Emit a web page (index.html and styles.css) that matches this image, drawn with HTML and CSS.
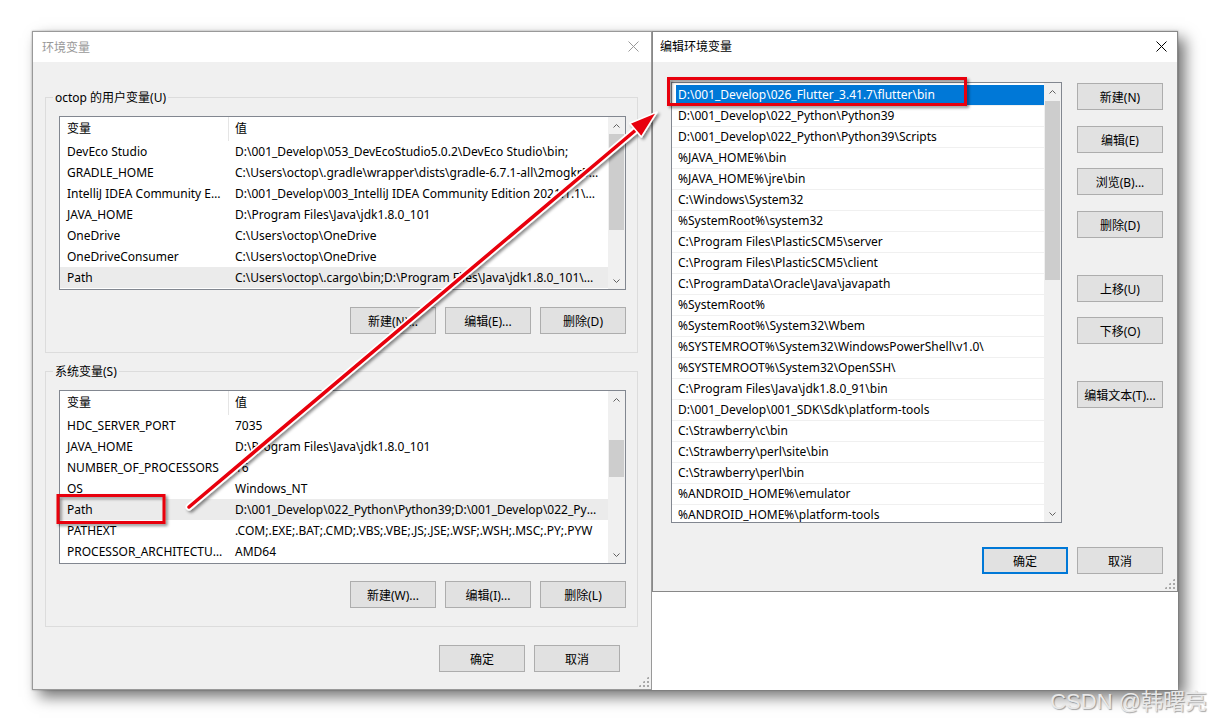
FILE: index.html
```html
<!DOCTYPE html>
<html lang="zh-CN">
<head>
    <meta charset="UTF-8">
    <meta name="viewport" content="width=device-width, initial-scale=1.0">
    <title>环境变量</title>
    <link rel="stylesheet" href="styles.css">
</head>
<body>
    <div class="shot">
        <!-- 环境变量 -->
        <div class="dialog env">
            <div class="titlebar inactive">
                <span>环境变量</span>
                <svg class="close" width="11" height="11" viewBox="0 0 11 11"><path d="M0.5 0.5 L10.5 10.5 M10.5 0.5 L0.5 10.5"/></svg>
            </div>
            <div class="env-body">
                <fieldset class="group">
                    <legend>octop 的用户变量(U)</legend>
                    <div class="lv">
                        <div class="lv-main">
                            <div class="lv-head"><span class="c-name">变量</span><span class="c-val">值</span></div>
                            <div class="lv-row"><span class="c-name">DevEco Studio</span><span class="c-val">D:\001_Develop\053_DevEcoStudio5.0.2\DevEco Studio\bin;</span></div>
                            <div class="lv-row"><span class="c-name">GRADLE_HOME</span><span class="c-val">C:\Users\octop\.gradle\wrapper\dists\gradle-6.7.1-all\2mogkr5btp8x2wqdpt7pgts1v\gradle-6.7.1</span></div>
                            <div class="lv-row"><span class="c-name">IntelliJ IDEA Community Edition</span><span class="c-val">D:\001_Develop\003_IntelliJ IDEA Community Edition 2021.1.1\bin;</span></div>
                            <div class="lv-row"><span class="c-name">JAVA_HOME</span><span class="c-val">D:\Program Files\Java\jdk1.8.0_101</span></div>
                            <div class="lv-row"><span class="c-name">OneDrive</span><span class="c-val">C:\Users\octop\OneDrive</span></div>
                            <div class="lv-row"><span class="c-name">OneDriveConsumer</span><span class="c-val">C:\Users\octop\OneDrive</span></div>
                            <div class="lv-row sel"><span class="c-name">Path</span><span class="c-val">C:\Users\octop\.cargo\bin;D:\Program Files\Java\jdk1.8.0_101\bin;D:\Program Files\Java\jdk1.8.0_101\jre\bin</span></div>
                        </div>
                        <div class="sb">
                            <div class="sb-btn"><svg width="7" height="4" viewBox="0 0 7 4"><path d="M0.5 3.5 L3.5 0.5 L6.5 3.5"/></svg></div>
                            <div class="sb-track"><div class="sb-thumb thumb-user"></div></div>
                            <div class="sb-btn"><svg width="7" height="4" viewBox="0 0 7 4"><path d="M0.5 0.5 L3.5 3.5 L6.5 0.5"/></svg></div>
                        </div>
                    </div>
                    <div class="btn-row">
                        <button>新建(N)...</button>
                        <button>编辑(E)...</button>
                        <button>删除(D)</button>
                    </div>
                </fieldset>

                <fieldset class="group sys">
                    <legend>系统变量(S)</legend>
                    <div class="lv">
                        <div class="lv-main">
                            <div class="lv-head"><span class="c-name">变量</span><span class="c-val">值</span></div>
                            <div class="lv-row"><span class="c-name">HDC_SERVER_PORT</span><span class="c-val">7035</span></div>
                            <div class="lv-row"><span class="c-name">JAVA_HOME</span><span class="c-val">D:\Program Files\Java\jdk1.8.0_101</span></div>
                            <div class="lv-row"><span class="c-name">NUMBER_OF_PROCESSORS</span><span class="c-val">16</span></div>
                            <div class="lv-row"><span class="c-name">OS</span><span class="c-val">Windows_NT</span></div>
                            <div class="lv-row sel"><span class="c-name">Path</span><span class="c-val">D:\001_Develop\022_Python\Python39;D:\001_Develop\022_Python\Python39\Scripts;%JAVA_HOME%\bin</span></div>
                            <div class="lv-row"><span class="c-name">PATHEXT</span><span class="c-val">.COM;.EXE;.BAT;.CMD;.VBS;.VBE;.JS;.JSE;.WSF;.WSH;.MSC;.PY;.PYW</span></div>
                            <div class="lv-row"><span class="c-name">PROCESSOR_ARCHITECTURE</span><span class="c-val">AMD64</span></div>
                        </div>
                        <div class="sb">
                            <div class="sb-btn"><svg width="7" height="4" viewBox="0 0 7 4"><path d="M0.5 3.5 L3.5 0.5 L6.5 3.5"/></svg></div>
                            <div class="sb-track"><div class="sb-thumb thumb-sys"></div></div>
                            <div class="sb-btn"><svg width="7" height="4" viewBox="0 0 7 4"><path d="M0.5 0.5 L3.5 3.5 L6.5 0.5"/></svg></div>
                        </div>
                    </div>
                    <div class="btn-row">
                        <button>新建(W)...</button>
                        <button>编辑(I)...</button>
                        <button>删除(L)</button>
                    </div>
                </fieldset>

                <div class="footer env-footer">
                    <button>确定</button>
                    <button>取消</button>
                </div>
            </div>
            <div class="grip"></div>
        </div>

        <!-- 编辑环境变量 -->
        <div class="dialog edit">
            <div class="titlebar">
                <span>编辑环境变量</span>
                <svg class="close" width="11" height="11" viewBox="0 0 11 11"><path d="M0.5 0.5 L10.5 10.5 M10.5 0.5 L0.5 10.5"/></svg>
            </div>
            <div class="edit-body">
                <div class="edit-top">
                    <div class="paths">
                        <div class="paths-main">
                            <div class="path sel">D:\001_Develop\026_Flutter_3.41.7\flutter\bin</div>
                            <div class="path">D:\001_Develop\022_Python\Python39</div>
                            <div class="path">D:\001_Develop\022_Python\Python39\Scripts</div>
                            <div class="path">%JAVA_HOME%\bin</div>
                            <div class="path">%JAVA_HOME%\jre\bin</div>
                            <div class="path">C:\Windows\System32</div>
                            <div class="path">%SystemRoot%\system32</div>
                            <div class="path">C:\Program Files\PlasticSCM5\server</div>
                            <div class="path">C:\Program Files\PlasticSCM5\client</div>
                            <div class="path">C:\ProgramData\Oracle\Java\javapath</div>
                            <div class="path">%SystemRoot%</div>
                            <div class="path">%SystemRoot%\System32\Wbem</div>
                            <div class="path">%SYSTEMROOT%\System32\WindowsPowerShell\v1.0\</div>
                            <div class="path">%SYSTEMROOT%\System32\OpenSSH\</div>
                            <div class="path">C:\Program Files\Java\jdk1.8.0_91\bin</div>
                            <div class="path">D:\001_Develop\001_SDK\Sdk\platform-tools</div>
                            <div class="path">C:\Strawberry\c\bin</div>
                            <div class="path">C:\Strawberry\perl\site\bin</div>
                            <div class="path">C:\Strawberry\perl\bin</div>
                            <div class="path">%ANDROID_HOME%\emulator</div>
                            <div class="path">%ANDROID_HOME%\platform-tools</div>
                        </div>
                        <div class="sb">
                            <div class="sb-btn"><svg width="7" height="4" viewBox="0 0 7 4"><path d="M0.5 3.5 L3.5 0.5 L6.5 3.5"/></svg></div>
                            <div class="sb-track"><div class="sb-thumb thumb-path"></div></div>
                            <div class="sb-btn"><svg width="7" height="4" viewBox="0 0 7 4"><path d="M0.5 0.5 L3.5 3.5 L6.5 0.5"/></svg></div>
                        </div>
                    </div>
                    <div class="side">
                        <button>新建(N)</button>
                        <button class="gap-md">编辑(E)</button>
                        <button>浏览(B)...</button>
                        <button class="gap-md">删除(D)</button>
                        <button class="gap-lg">上移(U)</button>
                        <button>下移(O)</button>
                        <button class="gap-lg">编辑文本(T)...</button>
                    </div>
                </div>
                <div class="footer edit-footer">
                    <button class="default">确定</button>
                    <button>取消</button>
                </div>
            </div>
            <div class="grip"></div>
        </div>
    </div>

    <!-- annotations drawn over the screenshot -->
    <svg class="annot" width="1211" height="722" viewBox="0 0 1211 722">
        <defs>
            <filter id="shade" x="-10%" y="-10%" width="120%" height="120%">
                <feDropShadow dx="2" dy="2" stdDeviation="1.5" flood-color="#000" flood-opacity="0.45"/>
            </filter>
        </defs>
        <g filter="url(#shade)">
            <rect x="58" y="495.5" width="106" height="27" fill="none" stroke="#e8000b" stroke-width="3"/>
            <rect x="668.5" y="78.5" width="297" height="26" fill="none" stroke="#e8000b" stroke-width="3"/>
        </g>
        <g filter="url(#shade)">
            <line x1="189" y1="507" x2="637" y2="129" stroke="#fff" stroke-width="7" stroke-linecap="round"/>
            <line x1="189" y1="507" x2="637" y2="129" stroke="#e8000b" stroke-width="3.5" stroke-linecap="round"/>
            <polygon points="657,112 641.4,137 629.8,123.2" fill="#e8000b" stroke="#fff" stroke-width="1.5" stroke-linejoin="round"/>
        </g>
    </svg>
    <div class="watermark">CSDN @韩曙亮</div>
</body>
</html>
```

FILE: styles.css
```css
* {
    box-sizing: border-box;
}
body {
    margin: 0;
    width: 1211px;
    height: 722px;
    overflow: hidden;
    position: relative;
    background-color: #fff;
    font-family: "Noto Sans", "Noto Sans CJK SC", sans-serif;
    font-size: 12px;
    color: #000;
}
.shot {
    display: flex;
    align-items: flex-start;
    width: 1146px;
    height: 659px;
    margin: 31px 0 0 32px;
    background-color: #fff;
    box-shadow: 0 0 2px rgba(0, 0, 0, 0.3), 7px 7px 14px rgba(0, 0, 0, 0.55);
}
.dialog {
    position: relative;
    display: flex;
    flex-direction: column;
    flex: none;
    background-color: #f0f0f0;
    border: 1px solid #999;
}
.dialog.env {
    width: 620px;
    height: 659px;
}
.dialog.edit {
    width: 526px;
    height: 561px;
    border-color: #888;
}
.titlebar {
    display: flex;
    align-items: center;
    justify-content: space-between;
    height: 30px;
    padding: 0 10px 2px 7px;
    background-color: #fff;
    flex: none;
}
.titlebar.inactive {
    padding: 0 12px 1px 9px;
    color: #999;
}
.close path {
    stroke: #000;
    stroke-width: 1;
    fill: none;
}
.titlebar.inactive .close path {
    stroke: #999;
}

/* group boxes */
.group {
    margin: 27px 13px 0 12px;
    padding: 11px 11px 18px 13px;
    border: 1px solid #dcdcdc;
    min-width: 0;
}
.group.sys {
    margin-top: 10px;
}
.group legend {
    margin-left: -6px;
    padding: 1px 2px 0;
    line-height: 15px;
}

/* list views */
.lv {
    display: flex;
    height: 174px;
    border: 1px solid #828790;
    background-color: #fff;
}
.lv-main {
    flex: 1;
    min-width: 0;
    overflow: hidden;
}
.lv-head {
    display: flex;
    height: 24px;
    line-height: 24px;
}
.lv-head .c-name {
    border-right: 1px solid #e5e5e5;
}
.lv-head .c-val {
    padding-left: 6px;
}
.lv-row {
    display: flex;
    height: 21px;
    line-height: 21px;
}
.lv-row.sel {
    background-color: #ebebeb;
}
.c-name {
    width: 169px;
    flex: none;
    padding: 0 5px 0 7px;
    white-space: nowrap;
    overflow: hidden;
    text-overflow: ellipsis;
}
.c-val {
    flex: 1;
    min-width: 0;
    padding: 0 8px 0 6px;
    white-space: nowrap;
    overflow: hidden;
    text-overflow: ellipsis;
}

/* scroll bars */
.sb {
    display: flex;
    flex-direction: column;
    width: 17px;
    flex: none;
    background-color: #f0f0f0;
}
.sb-btn {
    display: flex;
    align-items: center;
    justify-content: center;
    height: 17px;
    flex: none;
}
.sb-btn path {
    fill: none;
    stroke: #606060;
    stroke-width: 1;
}
.sb-track {
    flex: 1;
}
.sb-thumb {
    margin: 0 1px;
    background-color: #cdcdcd;
}
.thumb-user {
    height: 96px;
}
.thumb-sys {
    margin-top: 32px;
    height: 37px;
}
.thumb-path {
    margin-top: 1px;
    height: 179px;
}

/* buttons */
button {
    width: 86px;
    height: 27px;
    padding: 0;
    background-color: #e1e1e1;
    border: 1px solid #adadad;
    border-radius: 0;
    font-family: inherit;
    font-size: 12px;
    color: #000;
}
button.default {
    border: 2px solid #0078d7;
}
.btn-row {
    display: flex;
    justify-content: flex-end;
    gap: 9px;
    margin-top: 17px;
}
.footer {
    display: flex;
    justify-content: flex-end;
    gap: 9px;
}
.env-footer {
    margin-top: 18px;
    padding-right: 31px;
}

/* edit dialog */
.edit-body {
    display: flex;
    flex-direction: column;
    padding: 20px 14px 0 18px;
}
.edit-top {
    display: flex;
    gap: 15px;
}
.paths {
    display: flex;
    width: 391px;
    height: 441px;
    border: 1px solid #828790;
    background-color: #fff;
}
.paths-main {
    flex: 1;
    min-width: 0;
    padding-top: 2px;
    overflow: hidden;
}
.path {
    height: 21px;
    line-height: 20px;
    padding-left: 6px;
    border-bottom: 1px solid #f0f0f0;
    white-space: nowrap;
}
.path.sel {
    background: linear-gradient(to right, #fff 4px, #0078d7 4px);
    background-clip: padding-box;
    color: #fff;
}
.side {
    display: flex;
    flex-direction: column;
    padding-top: 1px;
}
.side button + button {
    margin-top: 15px;
}
.side button.gap-md {
    margin-top: 16px;
}
.side button.gap-lg {
    margin-top: 37px;
}
.edit-footer {
    margin-top: 24px;
}

.grip {
    position: absolute;
    right: 2px;
    bottom: 2px;
    width: 11px;
    height: 11px;
    background: radial-gradient(circle, #a8a8a8 1px, transparent 1.2px) 0 0 / 4px 4px;
    clip-path: polygon(100% 0, 100% 100%, 0 100%);
}

/* overlay */
.annot {
    position: absolute;
    left: 0;
    top: 0;
    pointer-events: none;
}
.watermark {
    position: absolute;
    right: 4px;
    top: 689px;
    line-height: 26px;
    font-family: "Liberation Sans", "Noto Sans CJK SC", sans-serif;
    font-size: 22px;
    color: #e8e8e8;
    text-shadow: 1px 1px 1px rgba(0, 0, 0, 0.35);
}
```
